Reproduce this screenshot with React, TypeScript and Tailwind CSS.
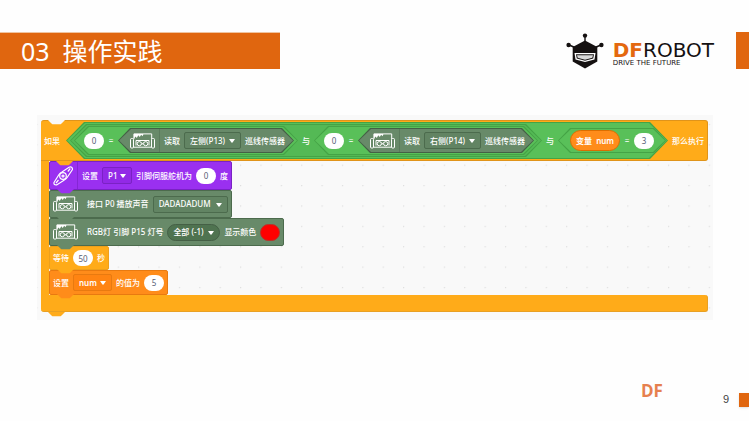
import React from "react";
import clsx from "clsx";

const font = "font-['Noto_Sans','Noto_Sans_CJK_SC',sans-serif]";

// Interlocking tab that hangs below (or cuts into) a block
const Bump = ({ className }: { className: string }) => (
  <svg viewBox="0 0 17 5" className={clsx("absolute left-[7px] z-10 h-[5px] w-[17px]", className)} fill="currentColor">
    <path d="M0 0h17L13.5 3.4Q12.8 4.3 11.5 4.3h-6Q4.2 4.3 3.5 3.4Z" />
  </svg>
);

const CarIcon = () => (
  <svg viewBox="0 0 25 16" className="h-4 w-[25px] shrink-0" fill="none" stroke="#fff" strokeWidth="1">
    <path d="M3.900 6V.9h17.800V6" />
    <path d="M4 1h9.500l-1 2.200-1.300-1.400-1.500 2.200-1.400-1.800L6.800 5 5.500 3.500 4 5.500Z" fill="#fff" stroke="none" />
    <rect x="0.5" y="5.500" width="3" height="9.500" rx="1" />
    <rect x="21.500" y="5.500" width="3" height="9.500" rx="1" />
    <path d="M3.500 14.200h18M6 12.500V7.500h13v5" />
    <circle cx="9.300" cy="10.700" r="2.100" />
    <circle cx="15.700" cy="10.700" r="2.100" />
    <path d="m11.500 9.500 2 2.400m0-2.400-2 2.400" strokeWidth="0.700" />
  </svg>
);

const ServoIcon = () => (
  <svg viewBox="0 0 20 20" className="h-5 w-5 shrink-0" fill="none" stroke="#fff" strokeWidth="1.200">
    <path d="M1 16.500 6 8.500Q7 7 9 6L16 1.200Q19.500 0 19.500 3.500L14.500 11Q13 13.500 11 14.200L4 18.800Q.5 19.500 1 16.500Z" />
    <circle cx="10" cy="10" r="3.300" />
    <circle cx="10" cy="10" r="1" />
    <path d="m3 17 2.500-3M14.800 5.500l2.500-3" />
  </svg>
);

const Divider = ({ className }: { className?: string }) => <span className={clsx("w-px shrink-0 self-stretch", className)} />;

const Label = ({ children }: { children: React.ReactNode }) => <span className="shrink-0 whitespace-nowrap">{children}</span>;

const NumberField = ({ value, label }: { value: string; label: string }) => (
  <input
    aria-label={label}
    defaultValue={value}
    className="h-4 w-5 shrink-0 rounded-full bg-white text-center font-normal text-[#575e75]"
  />
);

const Dropdown = ({ value, label, className }: { value: string; label: string; className: string }) => (
  <span className="relative flex shrink-0">
    <select
      aria-label={label}
      className={clsx("h-[17px] appearance-none border pl-[5px] text-white", className)}
    >
      <option>{value}</option>
    </select>
    <svg viewBox="0 0 6 4" className="pointer-events-none absolute top-[7px] right-[6px] h-1 w-[6px]" fill="#fff">
      <path d="M0.600 0h4.800q.6 0 .3.500L3.500 3.500Q3 4 2.500 3.500L.3.500Q0 0 .6 0Z" />
    </svg>
  </span>
);

const hexShape = {
  lg: "[clip-path:polygon(18px_0,calc(100%-18px)_0,100%_50%,calc(100%-18px)_100%,18px_100%,0_50%)]",
  md: "[clip-path:polygon(16px_0,calc(100%-16px)_0,100%_50%,calc(100%-16px)_100%,16px_100%,0_50%)]",
  sm: "[clip-path:polygon(14px_0,calc(100%-14px)_0,100%_50%,calc(100%-14px)_100%,14px_100%,0_50%)]",
  xs: "[clip-path:polygon(12px_0,calc(100%-12px)_0,100%_50%,calc(100%-12px)_100%,12px_100%,0_50%)]",
};

type HexProps = {
  size: keyof typeof hexShape;
  edge?: string;
  className: string;
  children: React.ReactNode;
};

// Boolean block: a one pixel darker hexagon with the fill laid inside it
const Hex = ({ size, edge = "bg-[#45a346]", className, children }: HexProps) => (
  <div className={clsx("flex shrink-0 p-px", hexShape[size], edge)}>
    <div className={clsx("flex items-center", hexShape[size], className)}>{children}</div>
  </div>
);

const Equals = () => <span className="w-[14px] shrink-0 text-center">=</span>;

const LineSensorCheck = ({ pin }: { pin: string }) => (
  <Hex size="sm" className="h-[27px] bg-[#59c059] pr-[3px] pl-[9px]">
    <NumberField value="0" label={`${pin} 0`} />
    <Equals />
    <Hex size="xs" edge="bg-[#456046]" className="h-[23px] gap-1 bg-[#688a69] pr-2 pl-[11px]">
      <CarIcon />
      <Divider className="bg-[#5b7b5c]" />
      <Label>读取</Label>
      <Dropdown value={pin} label="读取" className="w-[57px] rounded-[2px] border-[#4c6b4d] bg-[#628463]" />
      <Label>巡线传感器</Label>
    </Hex>
  </Hex>
);

type BlockProps = { className: string; bump: string; children: React.ReactNode };

const Block = ({ className, bump, children }: BlockProps) => (
  <div className={clsx("relative flex w-fit items-center gap-1 rounded-[2px] border px-[3px]", className)}>
    {children}
    <Bump className={clsx("top-full", bump)} />
  </div>
);

const Condition = () => (
  <div className="flex h-[41px] items-center gap-[6px] rounded-t-[3px] rounded-br-[3px] border-t border-r border-b border-[#e0941a] bg-[#ffab19] pl-[3px]">
    <Label>如果</Label>
    <div className="flex items-center gap-1">
      <Hex size="lg" className="h-[35px] gap-1 bg-[#59c059] pr-px pl-[3px]">
        <Hex size="md" className="h-[31px] gap-1 bg-[#54b955] px-[3px]">
          <LineSensorCheck pin="左侧(P13)" />
          <Label>与</Label>
          <LineSensorCheck pin="右侧(P14)" />
        </Hex>
        <Label>与</Label>
        <Hex size="xs" className="h-[23px] bg-[#59c059] px-[11px]">
          <span className="flex h-[21px] w-[50px] shrink-0 items-center justify-center rounded-full border border-[#db6e00] bg-[#ff8c1a] font-semibold whitespace-pre">
            变量  num
          </span>
          <Equals />
          <NumberField value="3" label="num" />
        </Hex>
      </Hex>
      <Label>那么执行</Label>
    </div>
  </div>
);

const Program = () => (
  <div className="relative mr-[5px] ml-1 text-[8px] leading-[12px] font-medium text-white">
    <Bump className="top-0 text-[#f9f9f9]" />
    <Condition />
    <div className="relative border-l-8 border-[#ffab19]">
      <Bump className="top-0 text-[#ffab19]" />
      <Block className="h-[29px] border-[#7a22c4] bg-[#9a30f0]" bump="text-[#9a30f0]">
        <ServoIcon />
        <Divider className="bg-[#8526d4]" />
        <Label>设置</Label>
        <Dropdown value="P1" label="设置" className="w-[30px] rounded-[2px] border-[#7a22c4] bg-[#9229e6]" />
        <Label>引脚伺服舵机为</Label>
        <NumberField value="0" label="引脚伺服舵机为" />
        <Label>度</Label>
      </Block>
      <Block className="h-7 border-[#4c6b4d] bg-[#688a69]" bump="text-[#688a69]">
        <CarIcon />
        <Divider />
        <Label>接口 P0 播放声音</Label>
        <Dropdown value="DADADADUM" label="播放声音" className="w-[75px] rounded-[2px] border-[#4c6b4d] bg-[#628463]" />
      </Block>
      <Block className="h-7 border-[#4c6b4d] bg-[#688a69]" bump="text-[#688a69]">
        <CarIcon />
        <Divider />
        <Label>RGB灯 引脚 P15 灯号</Label>
        <Dropdown value="全部 (-1)" label="灯号" className="w-[53px] rounded-full border-[#456046] bg-[#4f7350]" />
        <Label>显示颜色</Label>
        <button aria-label="显示颜色" className="h-[17px] w-5 shrink-0 rounded-full border border-[#b8332a] bg-[#ff0000]" />
      </Block>
      <Block className="h-6 border-[#eda01c] bg-[#ffab19]" bump="text-[#ffab19]">
        <Label>等待</Label>
        <NumberField value="50" label="等待" />
        <Label>秒</Label>
      </Block>
      <Block className="h-[25px] border-[#e87a10] bg-[#ff8c1a]" bump="text-[#ff8c1a]">
        <Label>设置</Label>
        <Dropdown value="num" label="设置" className="w-[39px] rounded-[2px] border-[#e87a10] bg-[#ff8412] font-semibold" />
        <Label>的值为</Label>
        <NumberField value="5" label="的值为" />
      </Block>
    </div>
    <div className="h-[17px] rounded-b-[3px] rounded-tr-[3px] border-r border-b border-[#e8a023] bg-[#ffab19]" />
    <Bump className="top-full text-[#ffab19]" />
  </div>
);

const GridDots = () => (
  <svg className="absolute inset-0 h-full w-full">
    <defs>
      <pattern id="dots" x="-0.8" y="8.900" width="20.380" height="20.380" patternUnits="userSpaceOnUse">
        <rect width="1.200" height="1.200" fill="#dedede" />
      </pattern>
    </defs>
    <rect width="100%" height="100%" fill="url(#dots)" />
  </svg>
);

const Logo = () => (
  <div className="flex items-start gap-[9px]">
    <svg viewBox="0 0 38 36" className="mt-px h-9 w-[38px]" fill="#151111">
      <circle cx="19" cy="2.600" r="2.200" />
      <circle cx="2.600" cy="12" r="2.200" />
      <circle cx="35.400" cy="12" r="2.200" />
      <path d="M18.300 3h1.400v6h-1.400zM2.700 11l6 2.500-.6 1.600-5.800-2.600zM35.300 11l-6 2.500.6 1.600 5.800-2.600z" />
      <path d="M19 7.500 31.300 14v14.500L19 35.500 6.700 28.500V14Z" />
      <path d="M8.500 20h21l-1 6.500L19 29l-9.500-2.500Z" fill="#fff" />
      <path d="M10 21.200h18l-.8 4.300L19 27.700l-8.200-2.200Z" />
      <path d="M11 22.200h16l-.7 2.600L19 26.700l-7.300-1.900Z" fill="#d8d8d8" />
    </svg>
    <div className="font-['DejaVu_Sans',sans-serif] text-[#151111]">
      <div className="mt-[9px] text-[20px] leading-[18px]">
        <span className="font-bold text-[#e4680f]">DF</span>ROBOT
      </div>
      <div className="text-[7px] leading-[8px]">DRIVE THE FUTURE</div>
    </div>
  </div>
);

export default function App() {
  return (
    <div className={clsx("min-h-screen bg-[#fefefe]", font)}>
      <header className="flex items-start pt-8">
        <h1 className="h-[37px] w-[280px] border-t border-[#f0c4a0] bg-[#e0660f] pl-[21px] text-[25px] leading-[36px] whitespace-pre text-white">
          03  操作实践
        </h1>
        <div className="ml-auto flex">
          <Logo />
          <div className="ml-[22px] h-[37px] w-[13px] bg-[#e0660f]" />
        </div>
      </header>
      <main className="relative mt-[46px] mr-9 ml-[37px] bg-[#f9f9f9] pt-[5px] pb-2">
        <GridDots />
        <Program />
      </main>
      <footer className="flex items-start justify-end pt-[61px]">
        <span className="mr-[60px] font-['Open_Sans',sans-serif] text-[17px] leading-[20px] font-bold text-[#e6804f]">DF</span>
        <span className="mt-3 mr-[10px] font-['Liberation_Sans',sans-serif] text-[11px] leading-[13px] text-[#444]">9</span>
        <div className="mt-3 h-[14px] w-[10px] bg-[#e0660f] shadow" />
      </footer>
    </div>
  );
}
